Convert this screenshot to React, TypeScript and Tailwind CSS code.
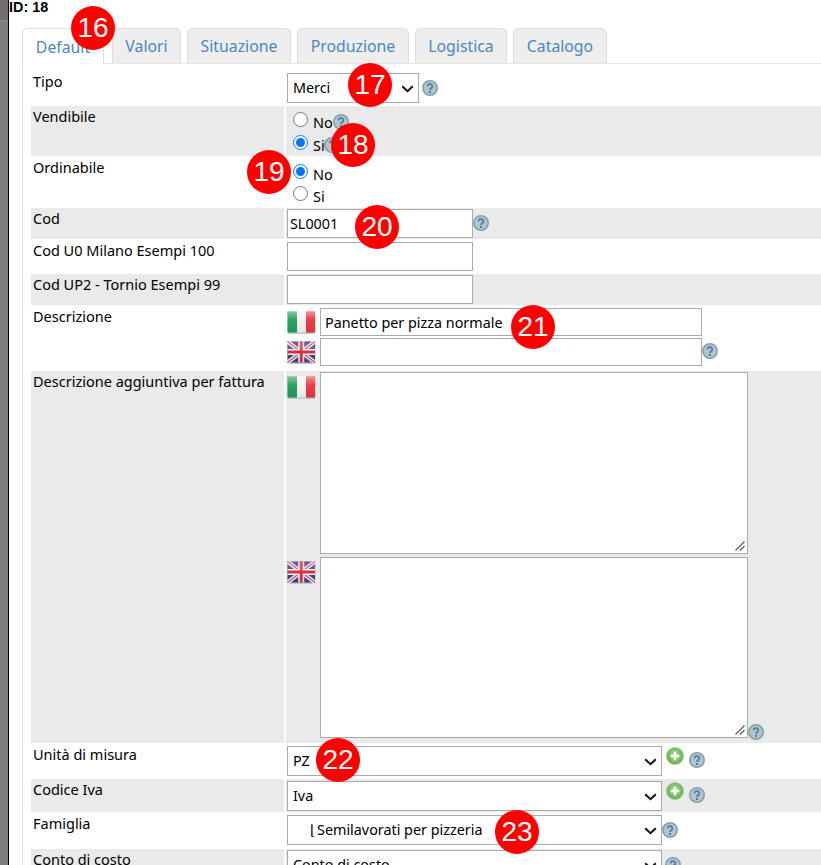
import React from "react";

function HelpIcon({ className = "" }: { className?: string }) {
  return (
    <svg width="16" height="16" viewBox="0 0 16 16" className={`shrink-0 ${className}`}>
      <circle cx="8" cy="8" r="8" fill="#86a0a8" />
      <circle cx="8" cy="8" r="6.4" fill="#afc6cd" />
      <path d="M5.7 6.3a2.3 2.3 0 1 1 3.7 1.8c-.9.6-1.4 1-1.4 2" fill="none" stroke="#5479a6" strokeWidth="1.8" />
      <rect x="7" y="11" width="2" height="2" fill="#5479a6" />
    </svg>
  );
}

function PlusIcon({ className = "" }: { className?: string }) {
  return (
    <svg width="18" height="18" viewBox="0 0 18 18" className={`shrink-0 ${className}`}>
      <defs>
        <radialGradient id="plusGreen" cx="50%" cy="45%" r="60%">
          <stop offset="0%" stopColor="#b5e0a0" />
          <stop offset="70%" stopColor="#6fb85c" />
          <stop offset="100%" stopColor="#5fa84e" />
        </radialGradient>
      </defs>
      <circle cx="9" cy="9" r="8.6" fill="url(#plusGreen)" stroke="#a5d494" strokeWidth="0.8" />
      <path d="M9 4.75v8.5M4.75 9h8.5" stroke="#fff" strokeWidth="2.6" />
    </svg>
  );
}

function FlagIt() {
  return (
    <svg width="29" height="23" viewBox="0 0 29 23" className="shrink-0">
      <defs>
        <linearGradient id="itGloss" x1="0" y1="0" x2="0" y2="1">
          <stop offset="0%" stopColor="#fff" stopOpacity="0.45" />
          <stop offset="40%" stopColor="#fff" stopOpacity="0.05" />
          <stop offset="100%" stopColor="#000" stopOpacity="0.06" />
        </linearGradient>
      </defs>
      <rect x="0.5" y="1" width="28" height="22" rx="2" fill="#c4c4c4" />
      <rect x="0.5" y="0.5" width="9.5" height="21" fill="#1f9d5a" />
      <rect x="10" y="0.5" width="9" height="21" fill="#f4f4f4" />
      <rect x="19" y="0.5" width="9" height="21" fill="#e8363f" />
      <rect x="0.5" y="0.5" width="27.5" height="21" rx="1.5" fill="url(#itGloss)" />
    </svg>
  );
}

function FlagUk() {
  return (
    <svg width="29" height="23" viewBox="0 0 29 23" className="shrink-0">
      <rect x="0.5" y="1" width="28" height="22" rx="2" fill="#c4c4c4" />
      <rect x="0.5" y="0.5" width="27.5" height="21" fill="#3a4086" />
      <path d="M0.5 0.5L28 21.5M28 0.5L0.5 21.5" stroke="#e4e4ec" strokeWidth="4" />
      <path d="M0.5 0.5L28 21.5M28 0.5L0.5 21.5" stroke="#d8505c" strokeWidth="1.2" />
      <path d="M14.25 0.5V21.5M0.5 11H28" stroke="#eee" strokeWidth="6" />
      <path d="M14.25 0.5V21.5M0.5 11H28" stroke="#dc2f3c" strokeWidth="3" />
      <rect x="0.5" y="0.5" width="27.5" height="9" fill="#fff" opacity="0.18" />
    </svg>
  );
}

function Row({
  label,
  gray,
  className,
  labelClass = "pt-[1px]",
  children,
}: {
  label: string;
  gray?: boolean;
  className: string;
  labelClass?: string;
  children: React.ReactNode;
}) {
  const bg = gray ? "bg-[#eaeaea]" : "bg-white";
  return (
    <div className={`flex ${className}`}>
      <div className={`w-[253px] shrink-0 pl-[2px] leading-[19px] ${labelClass} ${bg}`}>{label}</div>
      <div className={`ml-[2px] flex-1 min-w-0 pl-[1px] ${bg}`}>{children}</div>
    </div>
  );
}

function RadioLine({ name, label, checked, help, className = "" }: { name: string; label: string; checked?: boolean; help?: string; className?: string }) {
  return (
    <label className={`flex items-center h-[23px] pl-[6px] ${className}`}>
      <input type="radio" name={name} defaultChecked={checked} className="w-[15px] h-[15px] -mt-[7px]" />
      <span className="ml-[5px]">{label}</span>
      {help && <HelpIcon className={help} />}
    </label>
  );
}

const fieldClass = "border border-[#aaaaaa] bg-white text-[14.35px] text-black";

function Select({ w, label, pad = "pl-[5px]" }: { w: string; label: string; pad?: string }) {
  return (
    <div className={`relative shrink-0 h-[30px] ${w}`}>
      <select className={`${fieldClass} appearance-none w-full h-full ${pad} pr-[20px]`}>
        <option>{label}</option>
      </select>
      <svg width="13" height="8" viewBox="0 0 13 8" className="absolute right-[5px] top-[12px] pointer-events-none">
        <path d="M1.2 1.2L6.5 6.2L11.8 1.2" fill="none" stroke="#111" strokeWidth="2" />
      </svg>
    </div>
  );
}

function TextArea({ h }: { h: string }) {
  return (
    <div className={`relative w-[428px] ${h}`}>
      <textarea className={`${fieldClass} block w-full h-full resize-none`} />
      <svg width="10" height="10" viewBox="0 0 10 10" className="absolute right-[3px] bottom-[3px] pointer-events-none">
        <path d="M9.5 0.5L0.5 9.5M9.5 5L5 9.5" stroke="#555" strokeWidth="1.1" />
      </svg>
    </div>
  );
}

function Badge({ n, className }: { n: number; className: string }) {
  return (
    <div
      className={`absolute z-20 w-[44px] h-[44px] rounded-full bg-[#ff0000] text-white flex items-center justify-center text-[28px] font-['Liberation_Sans',Arial,sans-serif] ${className}`}
    >
      {n}
    </div>
  );
}

const tabs = [
  { name: "Valori", w: "w-[69px]", ml: "ml-[8px]" },
  { name: "Situazione", w: "w-[104px]", ml: "ml-[6px]" },
  { name: "Produzione", w: "w-[112px]", ml: "ml-[6px]" },
  { name: "Logistica", w: "w-[92px]", ml: "ml-[6px]" },
  { name: "Catalogo", w: "w-[94px]", ml: "ml-[6px]" },
];

export default function App() {
  return (
    <div className="relative flex w-[821px] h-[865px] overflow-hidden bg-white text-black text-[14.5px] font-['Noto_Sans','Open_Sans',sans-serif]">
      {/* left edge of the window behind */}
      <div className="w-[9px] shrink-0 border-r border-black bg-[#7d7d7d]">
        <div className="h-[21px] bg-[#6f6f6f] border-b border-[#8a8a8a]" />
      </div>

      <div className="flex-1 min-w-0">
        <div className="h-[28px] font-['Liberation_Sans',Arial,sans-serif] font-bold text-[14.4px] leading-[14px]">ID: 18</div>

        <div className="flex ml-[13px] h-[36px] items-stretch">
          <div className="w-[82px] h-[36px] relative z-10 pt-[2px] rounded-t-[6px] border border-b-0 border-[#dddddd] bg-white flex items-center justify-center text-[#4a86c0] text-[15.8px]">
            Default
          </div>
          {tabs.map((t) => (
            <div
              key={t.name}
              className={`${t.w} ${t.ml} h-[35px] pt-[2px] rounded-t-[6px] border border-b-0 border-[#dddddd] bg-[#eeeeee] flex items-center justify-center text-[#4a86c0] text-[15.8px]`}
            >
              {t.name}
            </div>
          ))}
        </div>

        <div className="ml-[13px] -mt-[1px] h-[802px] border-l border-t border-[#e6e6e6] pl-[8px] pt-[8px]">
          <Row label="Tipo" className="h-[34px]" labelClass="pt-0">
            <div className="flex items-start pt-[1px]">
              <Select w="w-[132px]" label="Merci" />
              <HelpIcon className="ml-[3px] mt-[7px]" />
            </div>
          </Row>
          <Row label="Vendibile" gray className="h-[50px]">
            <RadioLine name="vendibile" label="No" help="-mt-[2px]" className="mt-[5px]" />
            <RadioLine name="vendibile" label="Si" checked help="-ml-[1px] -mt-[2px]" />
          </Row>
          <Row label="Ordinabile" className="h-[52px]" labelClass="pt-[2px]">
            <RadioLine name="ordinabile" label="No" checked className="mt-[7px]" />
            <RadioLine name="ordinabile" label="Si" className="-mt-[1px]" />
          </Row>
          <Row label="Cod" gray className="h-[31px]">
            <div className="flex items-start pt-[1px]">
              <input defaultValue="SL0001" className={`${fieldClass} w-[186px] h-[29px] px-[2px]`} />
              <HelpIcon className="mt-[6px]" />
            </div>
          </Row>
          <Row label="Cod U0 Milano Esempi 100" className="h-[35px]" labelClass="pt-[2px]">
            <input className={`${fieldClass} block mt-[3px] w-[186px] h-[29px] px-[2px]`} />
          </Row>
          <Row label="Cod UP2 - Tornio Esempi 99" gray className="h-[31px]">
            <input className={`${fieldClass} block mt-[1px] w-[186px] h-[29px] px-[2px]`} />
          </Row>
          <Row label="Descrizione" className="h-[66px]" labelClass="pt-[2px]">
            <div className="flex items-start pt-[3px]">
              <div className="w-[33px] pt-[3px]"><FlagIt /></div>
              <input defaultValue="Panetto per pizza normale" className={`${fieldClass} w-[382px] h-[28px] px-[4px]`} />
            </div>
            <div className="flex items-start pt-[2px]">
              <div className="w-[33px] pt-[3px]"><FlagUk /></div>
              <input className={`${fieldClass} w-[382px] h-[28px] px-[4px]`} />
              <HelpIcon className="mt-[5px]" />
            </div>
          </Row>
          <Row label="Descrizione aggiuntiva per fattura" gray className="h-[372px]">
            <div className="flex items-start pt-[1px]">
              <div className="w-[33px] pt-[4px]"><FlagIt /></div>
              <TextArea h="h-[182px]" />
            </div>
            <div className="flex items-start pt-[3px]">
              <div className="w-[33px] pt-[4px]"><FlagUk /></div>
              <TextArea h="h-[181px]" />
              <HelpIcon className="mt-[167px]" />
            </div>
          </Row>
          <Row label="Unità di misura" className="h-[36px]" labelClass="pt-[2px]">
            <div className="flex items-start pt-[3px]">
              <Select w="w-[375px]" label="PZ" />
              <PlusIcon className="ml-[4px] mt-[1px]" />
              <HelpIcon className="ml-[5px] mt-[6px]" />
            </div>
          </Row>
          <Row label="Codice Iva" gray className="h-[33px]">
            <div className="flex items-start pt-[2px]">
              <Select w="w-[375px]" label="Iva" />
              <PlusIcon className="ml-[4px] mt-[1px]" />
              <HelpIcon className="ml-[5px] mt-[6px]" />
            </div>
          </Row>
          <Row label="Famiglia" className="h-[37px]" labelClass="pt-[2px]">
            <div className="flex items-start pt-[3px]">
              <Select w="w-[375px]" pad="pl-[3px]" label={"\u00a0\u00a0\u00a0\u00a0\u00a0⌊\u2009Semilavorati per pizzeria"} />
              <HelpIcon className="mt-[7px]" />
            </div>
          </Row>
          <Row label="Conto di costo" gray className="h-[34px]">
            <div className="flex items-start pt-[1px]">
              <Select w="w-[375px]" label="Conto di costo" />
              <HelpIcon className="ml-[3px] mt-[7px]" />
            </div>
          </Row>
        </div>
      </div>

      <Badge n={16} className="left-[71px] top-[6px]" />
      <Badge n={17} className="left-[348px] top-[63px]" />
      <Badge n={18} className="left-[331px] top-[123px]" />
      <Badge n={19} className="left-[247px] top-[150px]" />
      <Badge n={20} className="left-[355px] top-[205px]" />
      <Badge n={21} className="left-[511px] top-[305px]" />
      <Badge n={22} className="left-[316px] top-[738px]" />
      <Badge n={23} className="left-[495px] top-[810px]" />
    </div>
  );
}
